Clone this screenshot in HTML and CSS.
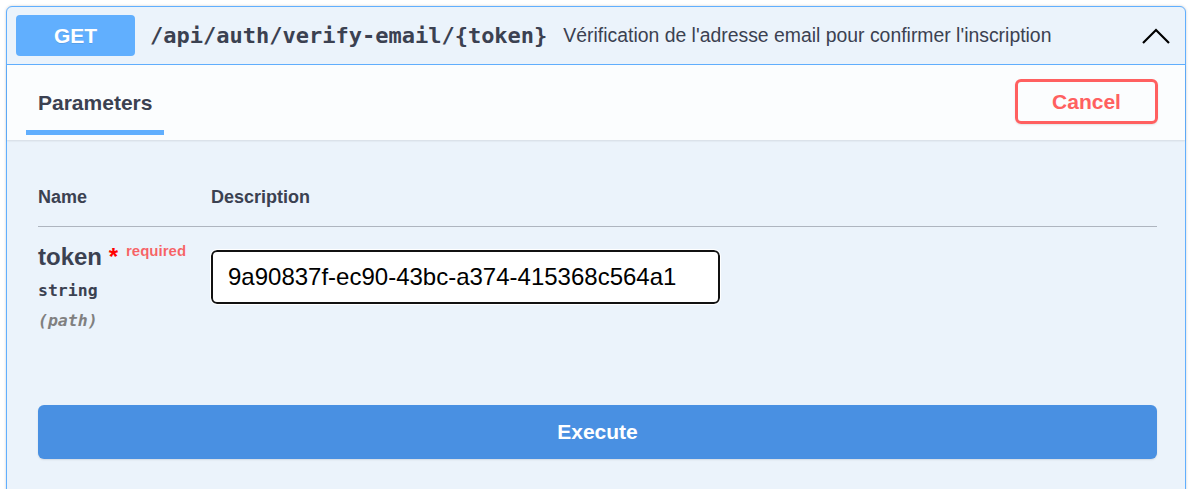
FILE: index.html
```html
<!DOCTYPE html>
<html lang="fr">
<head>
<meta charset="utf-8">
<title>verify-email</title>
<link rel="stylesheet" href="styles.css">
</head>
<body>
<div class="page">
  <div class="opblock">
    <div class="summary">
      <span class="method">GET</span>
      <span class="path">/api/auth/verify-email/{token}</span>
      <span class="desc">Vérification de l'adresse email pour confirmer l'inscription</span>
      <svg class="chev" width="28" height="16" viewBox="0 0 28 16"><polyline points="1,15 14,2 27,15" fill="none" stroke="#000" stroke-width="2.2"/></svg>
    </div>
    <div class="section-header">
      <div class="tab"><h4 class="tab-title">Parameters</h4></div>
      <button class="cancel">Cancel</button>
    </div>
    <div class="params">
      <div class="row head">
        <div class="col-name">Name</div>
        <div class="col-desc">Description</div>
      </div>
      <div class="row param">
        <div class="col-name">
          <div class="pname">token<span class="star">&nbsp;*</span><span class="req">required</span></div>
          <div class="ptype">string</div>
          <div class="pin">(path)</div>
        </div>
        <div class="col-desc">
          <input class="pinput" type="text" value="9a90837f-ec90-43bc-a374-415368c564a1">
        </div>
      </div>
    </div>
    <div class="exec-wrap">
      <button class="execute">Execute</button>
    </div>
  </div>
</div>
</body>
</html>
```
FILE: styles.css
```css
* { box-sizing: border-box; }
html, body { margin: 0; padding: 0; background: #fff; }
body { font-family: "Liberation Sans", Arial, sans-serif; color: #3b4151; }
.page { padding: 6px 6px 0 6px; }
.opblock {
  border: 1px solid #61affe;
  border-radius: 6px;
  background: #ebf3fb;
  box-shadow: 0 0 3px rgba(0,0,0,.19);
  height: 520px;
}
.summary {
  display: flex;
  align-items: center;
  height: 58px;
  padding: 0 15px 0 9px;
  border-bottom: 1px solid #61affe;
}
.method {
  width: 119px;
  height: 41px;
  background: #61affe;
  border-radius: 4px;
  color: #fff;
  font-weight: bold;
  font-size: 21px;
  display: flex;
  align-items: center;
  justify-content: center;
  text-shadow: 0 1px 0 rgba(0,0,0,.1);
}
.path {
  margin-left: 15px;
  font-family: "DejaVu Sans Mono", monospace;
  font-weight: bold;
  font-size: 22px;
  color: #3b4151;
}
.desc {
  margin-left: 16px;
  font-size: 19.4px;
  color: #3b4151;
  flex: 1;
}
.chev { display: block; }
.section-header {
  display: flex;
  align-items: center;
  justify-content: space-between;
  height: 75px;
  background: rgba(255,255,255,.8);
  box-shadow: 0 1px 2px rgba(0,0,0,.1);
  padding: 0 27px 0 19px;
  position: relative;
}
.tab {
  height: 100%;
  padding: 0 12px;
  display: flex;
  align-items: center;
  position: relative;
}
.tab::after {
  content: "";
  position: absolute;
  left: 0; right: 0; bottom: 5px;
  height: 5px;
  background: #61affe;
}
.tab-title {
  margin: 0;
  font-size: 21px;
  font-weight: bold;
  color: #3b4151;
  padding-top: 1px;
}
.cancel {
  width: 143px;
  height: 45px;
  margin-top: -2px;
  border: 3px solid #ff6060;
  border-radius: 6px;
  background: transparent;
  color: #ff6060;
  font-family: "Liberation Sans", Arial, sans-serif;
  font-weight: bold;
  font-size: 21px;
  box-shadow: 0 1px 2px rgba(0,0,0,.1);
}
.params { padding: 45px 28px 0 31px; }
.row { display: flex; }
.col-name { width: 173px; }
.col-desc { flex: 1; }
.head {
  font-size: 18px;
  font-weight: bold;
  line-height: 24px;
  padding-bottom: 17px;
  border-bottom: 1px solid rgba(59,65,81,.35);
}
.param { padding-top: 15px; }
.pname {
  font-size: 24px;
  font-weight: bold;
  line-height: 30px;
  color: #3b4151;
}
.star { color: red; }
.req {
  color: rgba(255,0,0,.6);
  font-size: 15px;
  padding: 0 0 0 8px;
  position: relative;
  top: -9px;
}
.ptype {
  font-family: "DejaVu Sans Mono", monospace;
  font-weight: bold;
  font-size: 16.5px;
  line-height: 24px;
  padding: 4px 0 6px;
}
.pin {
  font-family: "DejaVu Sans Mono", monospace;
  font-weight: bold;
  font-style: italic;
  font-size: 16.5px;
  line-height: 24px;
  color: #808080;
}
.pinput {
  margin-top: 8px;
  width: 509px;
  height: 54px;
  border: 2px solid #111;
  border-radius: 6px;
  background: #fff;
  padding: 0 15px;
  font-family: "Liberation Sans", Arial, sans-serif;
  font-size: 24px;
  color: #000;
  outline: 1px solid #fff;
}
.exec-wrap { padding: 72px 28px 0 31px; }
.execute {
  display: block;
  width: 100%;
  height: 54px;
  background: #4990e2;
  border: none;
  border-radius: 6px;
  color: #fff;
  font-family: "Liberation Sans", Arial, sans-serif;
  font-weight: bold;
  font-size: 21px;
  box-shadow: 0 1px 2px rgba(0,0,0,.1);
}
```
